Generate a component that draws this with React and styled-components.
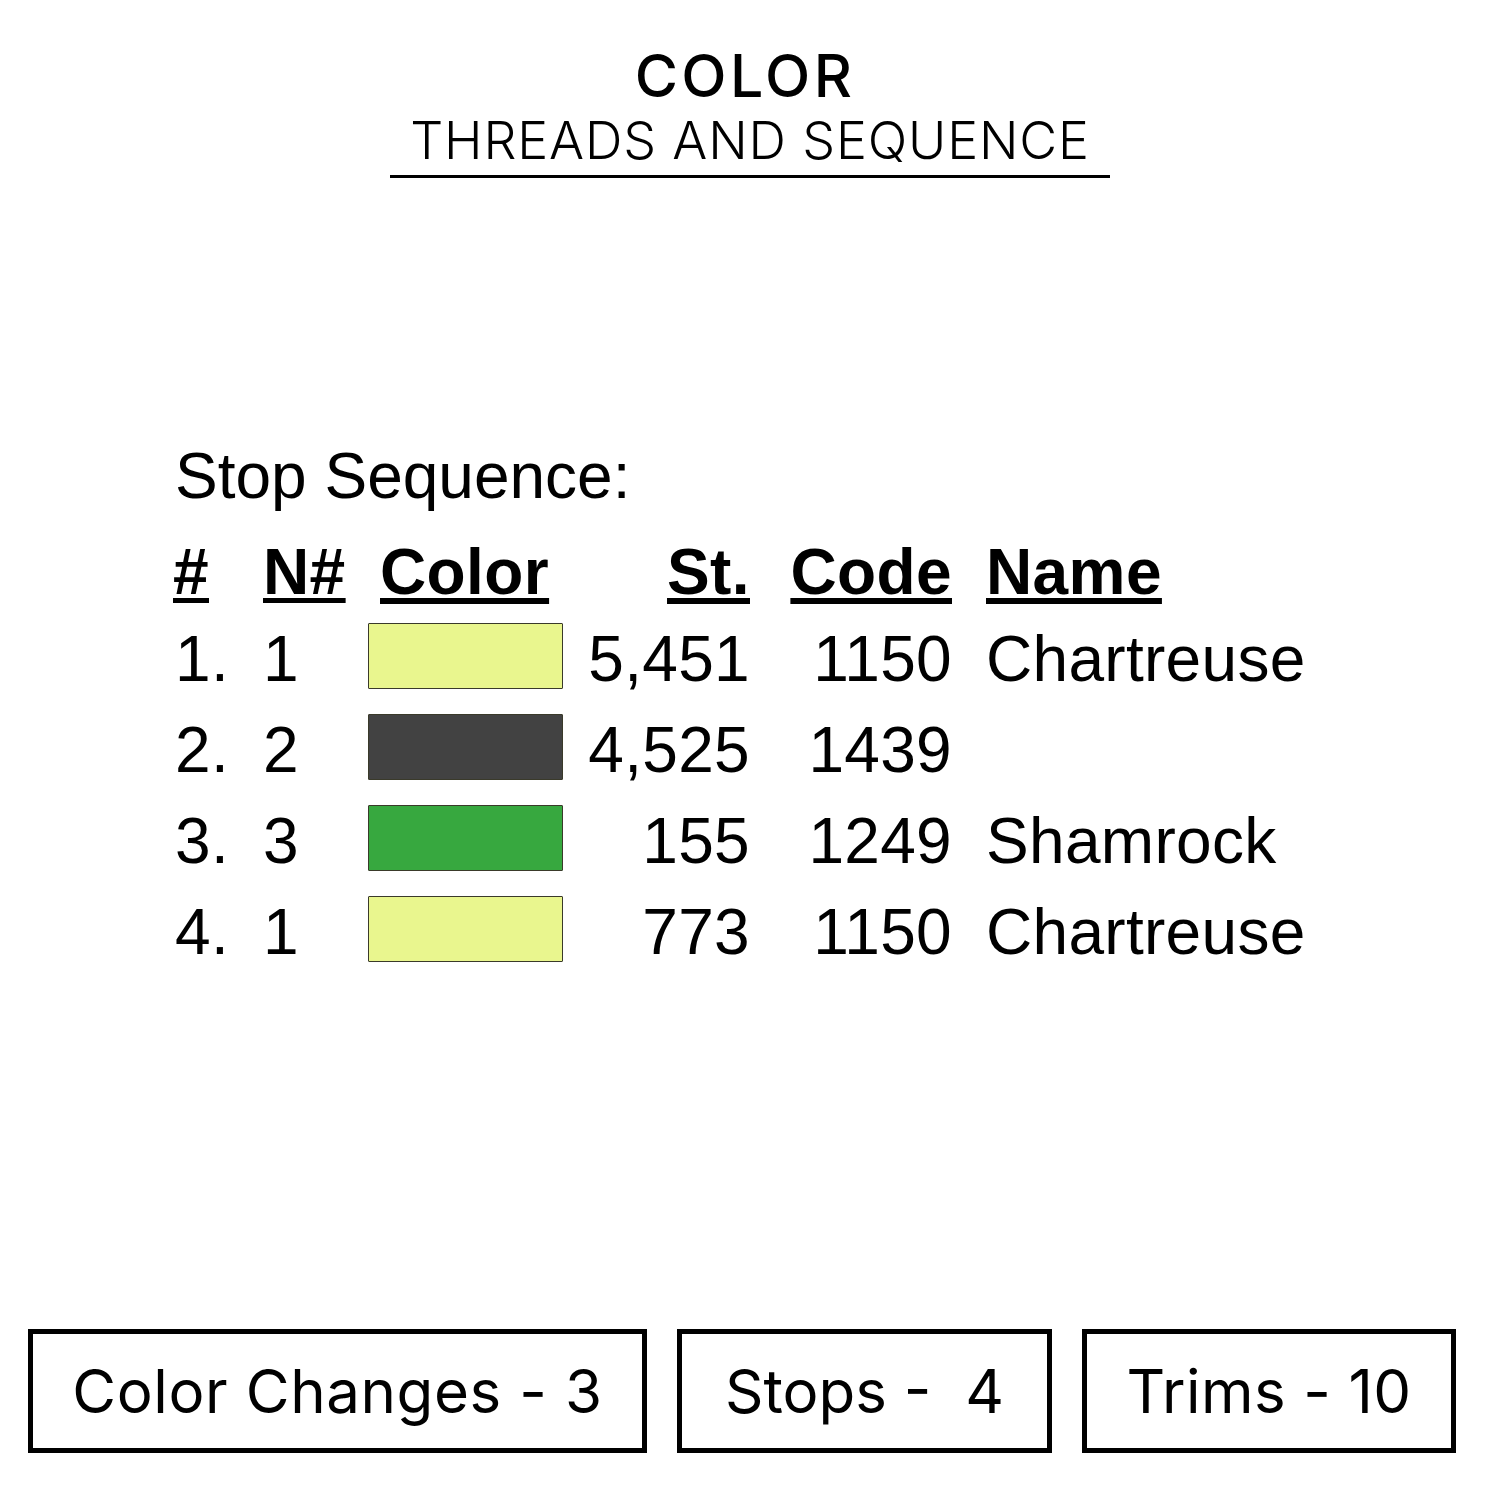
import React from "react";
import styled, { createGlobalStyle } from "styled-components";

const Global = createGlobalStyle`
  html, body { margin: 0; padding: 0; background: #fff; }
  body { width: 1500px; height: 1500px; overflow: hidden; }
`;

const Page = styled.div`
  width: 1500px;
  height: 1500px;
  display: flex;
  flex-direction: column;
  background: #fff;
  color: #000;
`;

const Header = styled.header`
  display: flex;
  flex-direction: column;
  align-items: center;
  padding-top: 41px;
  font-family: "Inter", "Liberation Sans", sans-serif;
`;

const Title = styled.h1`
  margin: 0 0 0 -10px;
  font-size: 59px;
  line-height: 70px;
  font-weight: 500;
  letter-spacing: 3.4px;
`;

const Subtitle = styled.h2`
  margin: 0;
  padding: 0 20px 4px;
  font-size: 52px;
  line-height: 60px;
  font-weight: 300;
  letter-spacing: 0.85px;
  border-bottom: 3px solid #000;
`;

const Sequence = styled.section`
  margin-top: 266px;
  padding-left: 173px;
  font-family: "Liberation Sans", Arial, sans-serif;
  font-size: 64px;
  color: #000;
`;

const Caption = styled.div`
  line-height: 64px;
  margin-left: 2px;
  margin-bottom: 23px;
`;

const Row = styled.div`
  display: grid;
  grid-template-columns: 90px 105px 195px 187px 202px auto;
  height: ${(p) => (p.$head ? 83 : 91)}px;
  line-height: ${(p) => (p.$head ? 83 : 91)}px;
  font-weight: ${(p) => (p.$head ? 700 : 400)};
  letter-spacing: ${(p) => (p.$head ? 0.4 : 0.3)}px;
  white-space: nowrap;
`;

const Cell = styled.div`
  text-align: ${(p) => (p.$right ? "right" : "left")};
  padding-left: ${(p) => p.$pl || 0}px;
  text-decoration: ${(p) => (p.$u ? "underline" : "none")};
  text-decoration-thickness: 5px;
  text-underline-offset: 4px;
`;

const Swatch = styled.div`
  margin-top: 9px;
  height: 64px;
  width: 193px;
  background: ${(p) => p.$color};
  border: 1px solid #3a3a2a;
  border-radius: 1px;
`;

const Footer = styled.footer`
  margin-top: auto;
  margin-bottom: 47px;
  display: flex;
  gap: 30px;
  padding-left: 28px;
  font-family: "Inter", "Liberation Sans", sans-serif;
`;

const Stat = styled.div`
  box-sizing: border-box;
  width: ${(p) => p.$w}px;
  height: 124px;
  border: 5px solid #000;
  display: flex;
  align-items: center;
  justify-content: center;
  font-size: 60px;
  font-weight: 400;
  letter-spacing: ${(p) => p.$ls || 0}px;
  white-space: pre;
`;

const rows = [
  { n: "1.", nn: "1", color: "#e9f68e", st: "5,451", code: "1150", name: "Chartreuse" },
  { n: "2.", nn: "2", color: "#424242", st: "4,525", code: "1439", name: "" },
  { n: "3.", nn: "3", color: "#37a83f", st: "155", code: "1249", name: "Shamrock" },
  { n: "4.", nn: "1", color: "#e9f68e", st: "773", code: "1150", name: "Chartreuse" },
];

export default function App() {
  return (
    <Page>
      <Global />
      <Header>
        <Title>COLOR</Title>
        <Subtitle>THREADS AND SEQUENCE</Subtitle>
      </Header>
      <Sequence>
        <Caption>Stop Sequence:</Caption>
        <Row $head>
          <Cell $u>#</Cell>
          <Cell $u>N#</Cell>
          <Cell $pl={12}><u>Color</u></Cell>
          <Cell $right><u>St.</u></Cell>
          <Cell $right><u>Code</u></Cell>
          <Cell $pl={34}><u>Name</u></Cell>
        </Row>
        {rows.map((r, i) => (
          <Row key={i}>
            <Cell $pl={2}>{r.n}</Cell>
            <Cell>{r.nn}</Cell>
            <Swatch $color={r.color} />
            <Cell $right>{r.st}</Cell>
            <Cell $right>{r.code}</Cell>
            <Cell $pl={34}>{r.name}</Cell>
          </Row>
        ))}
      </Sequence>
      <Footer>
        <Stat $w={619} $ls={0.6}>Color Changes - 3</Stat>
        <Stat $w={375}>{"Stops -  4"}</Stat>
        <Stat $w={374} $ls={0.4}>Trims - 10</Stat>
      </Footer>
    </Page>
  );
}
